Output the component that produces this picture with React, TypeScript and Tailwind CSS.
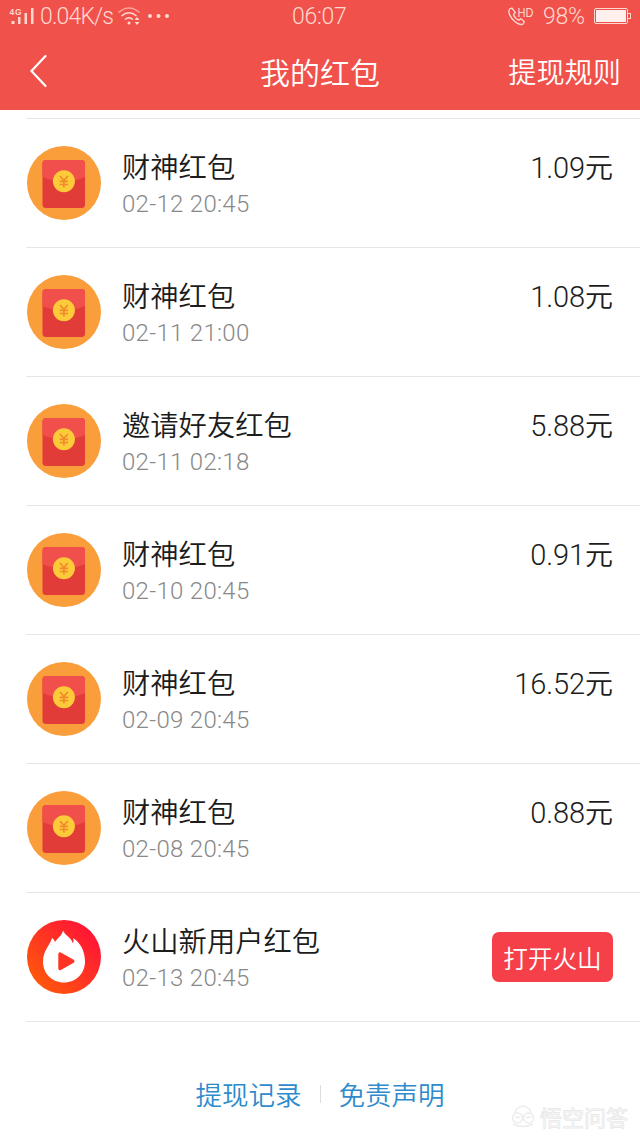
type RedPacket = {
  title: string;
  date: string;
  amount?: string;
};

const packets: RedPacket[] = [
  { title: "财神红包", date: "02-12 20:45", amount: "1.09" },
  { title: "财神红包", date: "02-11 21:00", amount: "1.08" },
  { title: "邀请好友红包", date: "02-11 02:18", amount: "5.88" },
  { title: "财神红包", date: "02-10 20:45", amount: "0.91" },
  { title: "财神红包", date: "02-09 20:45", amount: "16.52" },
  { title: "财神红包", date: "02-08 20:45", amount: "0.88" },
  { title: "火山新用户红包", date: "02-13 20:45" },
];

const PacketIcon = () => (
  <svg viewBox="0 0 74 74" className="size-[74px] shrink-0">
    <circle cx="37" cy="37" r="37" fill="#fa9d3b" />
    <rect x="15.500" y="14" width="42.5" height="48" rx="3.500" fill="#e23c38" />
    <path d="M15.500 31V17.500a3.500 3.500 0 0 1 3.500-3.500h35.500a3.500 3.500 0 0 1 3.500 3.500v13.500Q37 40 15.500 31Z" fill="#f04f4b" />
    <circle cx="36.900" cy="35.200" r="11" fill="#fdcb3a" />
    <path
      d="M33 30l3.900 4.500 3.900-4.500M36.900 34.500v7M32.700 35.300h8.400M32.700 38.500h8.400"
      fill="none"
      stroke="#f08a2c"
      strokeWidth="1.700"
    />
  </svg>
);

const VolcanoIcon = () => (
  <svg viewBox="0 0 74 74" className="size-[74px] shrink-0">
    <defs>
      <linearGradient id="volcano" x1="0.1" y1="0.9" x2="0.9" y2="0.1">
        <stop offset="0" stopColor="#ff5a0a" />
        <stop offset="0.5" stopColor="#ff3522" />
        <stop offset="1" stopColor="#ff1238" />
      </linearGradient>
    </defs>
    <circle cx="37" cy="37" r="37" fill="url(#volcano)" />
    <path
      d="M36 10.500C37.500 15 44 17 46 23.500C46.800 21.500 46.700 20 46 18C53 22 58 31 58 41.500C58 53.500 49 62.500 37 62.500C25 62.500 16 53.500 16 41.500C16 31 22.500 26 25 18C26.500 19 27.300 20.200 28 22C31 17.500 35 15.500 36 10.500Z"
      fill="#fff"
    />
    <path d="M33 34v14.500l12.800-7.250z" fill="#ff3424" stroke="#ff3424" strokeWidth="3.400" strokeLinejoin="round" />
  </svg>
);

const StatusBar = () => (
  <div className="flex h-8 items-center justify-between px-[9px] font-['Roboto',sans-serif] text-[#ffd9d0]">
    {/* SIGNAL + SPEED */}
    <div className="flex w-[283px] items-center">
      <svg viewBox="0 0 26 20" className="mr-[5px] h-5 w-[26px]" fill="currentColor">
        <text x="0.500" y="8.500" fontSize="8.500" fontWeight="700" fontFamily="Liberation Sans, sans-serif" textLength="12">
          4G
        </text>
        <path d="M2.500 15h3v3h-3zM9 11h2.500v7H9zM15.500 7H18v11h-2.500zM22 2h2.500v16H22z" />
      </svg>
      <span className="w-[74px] whitespace-nowrap pt-0.5 text-[23px] font-light leading-[30px] tracking-[-0.850px]">0.04K/s</span>
      <svg viewBox="0 0 24 20" className="ml-1 h-5 w-6" fill="none" stroke="currentColor" strokeWidth="1.600">
        <path d="M0.500 6.500Q11 -2.500 21.500 6.500" opacity="0.6" />
        <path d="M3.500 10Q11 3.500 18.500 10M7 13.500Q11 10 15 13.500" />
        <circle cx="11" cy="17" r="1.500" fill="currentColor" stroke="none" />
        <path d="M19 11l2.500 3h-5zM19 19l2.500-3h-5z" fill="currentColor" stroke="none" />
      </svg>
      <svg viewBox="0 0 22 4" className="ml-[6px] h-1 w-[22px]" fill="currentColor">
        <circle cx="2" cy="2" r="2" />
        <circle cx="10.500" cy="2" r="2" />
        <circle cx="19" cy="2" r="2" />
      </svg>
    </div>

    <span className="flex-1 pt-0.5 text-[23px] font-light leading-[30px] tracking-[-0.300px]">06:07</span>

    {/* CALL + BATTERY */}
    <div className="flex items-center">
      <svg viewBox="0 0 28 20" className="mr-2 h-5 w-7" fill="none" stroke="currentColor" strokeWidth="1.300">
        <path
          d="M2.800 2.800l2-.8 3.500 4.300-1.800 2.200c.8 2.200 3 4.800 5.300 5.700l2.200-1.600 3.300 3.200-1 2c-2 1.400-5.500.3-8.800-2.600C3.500 11.700 0.200 6 2.800 2.800Z"
          strokeLinejoin="round"
        />
        <text x="10.500" y="10.500" fontSize="13" fontFamily="Liberation Sans, sans-serif" fill="currentColor" stroke="none" textLength="16" lengthAdjust="spacingAndGlyphs">
          HD
        </text>
      </svg>
      <span className="w-[43px] whitespace-nowrap pt-0.5 text-[23px] font-light leading-[30px] tracking-[-0.300px]">98%</span>
      <div className="ml-2 flex items-center">
        <div className="h-4 w-[34px] rounded-[2px] border border-[#ffd9d0] p-px">
          <div className="h-full w-full bg-[#fff0ee]" />
        </div>
        <div className="h-1.5 w-[3px] border border-l-0 border-[#ffd9d0]" />
      </div>
    </div>
  </div>
);

const Row = ({ title, date, amount }: RedPacket) => (
  <div className="flex h-[129px] border-b border-[#e6e6e6] pl-px pr-[27px] pt-[27px]">
    {amount ? <PacketIcon /> : <VolcanoIcon />}
    <div className="ml-[21px] flex-1">
      <div className="h-[39px] text-[28.300px] font-[350] leading-[40px] text-[#1c1c1c]">{title}</div>
      <div className="font-['Roboto',sans-serif] text-[24px] font-[350] leading-[38px] tracking-[0.300px] text-[#888]">{date}</div>
    </div>
    {amount ? (
      <div className="flex text-[#1c1c1c]">
        <span className="font-['Roboto',sans-serif] text-[29px] font-[350] leading-[45px] tracking-[-0.100px]">{amount}</span>
        <span className="text-[28px] font-[350] leading-[40px]">元</span>
      </div>
    ) : (
      <button className="mt-[12px] h-[50px] w-[121px] rounded-[7px] bg-[#f5404a] text-[24.600px] font-[350] leading-[50px] text-white">
        打开火山
      </button>
    )}
  </div>
);

const Watermark = () => (
  <div className="absolute bottom-[8px] right-[12px] flex items-center gap-1 text-[#ececec]">
    <svg viewBox="0 0 26 24" className="h-6 w-[26px]" fill="none" stroke="currentColor" strokeWidth="1.500">
      <path d="M5 9Q6 3 13 2Q20 3 21 9M3 20Q13 25 23 20" />
      <circle cx="7.500" cy="14" r="5" />
      <circle cx="18.500" cy="14" r="5" />
      <path d="M5 14q2.500-2 5 0M16 14q2.500-2 5 0" />
    </svg>
    <span className="text-[22px] leading-7 text-white [-webkit-text-stroke:1px_#eaeaea]">悟空问答</span>
  </div>
);

const App = () => {
  return (
    <div className="relative h-[1138px] w-[640px] overflow-hidden bg-white font-['Noto_Sans_CJK_SC',sans-serif]">
      {/* HEADER */}
      <header className="h-[110px] bg-[#f0514b]">
        <StatusBar />
        <div className="relative flex h-[78px] items-center justify-between pl-[29px] pr-[19px] text-white">
          <svg viewBox="0 0 20 36" className="h-9 w-5" fill="none" stroke="currentColor" strokeWidth="2.200" strokeLinecap="round">
            <path d="M16.500 3L2.500 18l14 15" />
          </svg>
          <h1 className="absolute inset-x-0 text-center text-[30px] font-[350] leading-[42px]">我的红包</h1>
          <span className="relative text-[28.200px] font-[350] leading-[44px]">提现规则</span>
        </div>
      </header>

      {/* LIST */}
      <main className="ml-[26px] pt-2">
        <div className="border-t border-[#e6e6e6]">
          {packets.map((packet) => (
            <Row key={packet.date} {...packet} />
          ))}
        </div>
      </main>

      {/* FOOTER LINKS */}
      <footer className="mt-[52px] flex items-center justify-center text-[26.500px] font-[350] leading-10 text-[#2f8bcb]">
        <span>提现记录</span>
        <span className="mx-[18px] h-[18px] w-px bg-[#ddd]" />
        <span>免责声明</span>
      </footer>

      <Watermark />
    </div>
  );
};

export default App;
